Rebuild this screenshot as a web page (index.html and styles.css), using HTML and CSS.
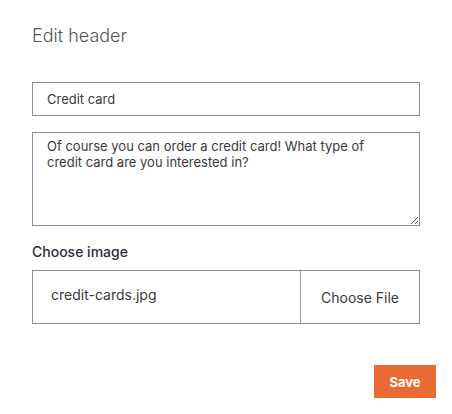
FILE: index.html
```html
<!DOCTYPE html>
<html lang="en">
<head>
    <meta charset="UTF-8">
    <meta name="viewport" content="width=device-width, initial-scale=1.0">
    <title>Edit header</title>
    <link rel="stylesheet" href="styles.css">
</head>
<body>
    <div class="panel">
        <h1 class="title">Edit header</h1>

        <form class="form">
            <input class="field" type="text" value="Credit card">

            <textarea class="field area">Of course you can order a credit card! What type of credit card are you interested in?</textarea>

            <label class="label">Choose image</label>
            <div class="file">
                <span class="file-name">credit-cards.jpg</span>
                <span class="file-btn">Choose File</span>
            </div>

            <div class="actions">
                <button type="button" class="save">Save</button>
            </div>
        </form>
    </div>
</body>
</html>
```

FILE: styles.css
```css
body {
    margin: 0;
    background: #fff;
    font-family: Inter, "Open Sans", sans-serif;
    color: #333;
}
.panel {
    padding: 24px 16px 16px 32px;
}
.title {
    margin: 0;
    font-size: 18px;
    line-height: 24px;
    font-weight: 300;
    color: #555;
}
.form {
    display: flex;
    flex-direction: column;
    margin-top: 34px;
    padding-right: 16px;
}
.field {
    box-sizing: border-box;
    height: 34px;
    margin: 0 0 16px;
    padding: 0 14px;
    border: 1px solid #8e8e92;
    border-radius: 0;
    font-family: inherit;
    font-size: 13px;
    color: #3a3a3a;
    outline: none;
}
.area {
    height: 94px;
    padding: 5px 50px 5px 14px;
    line-height: 16px;
    resize: vertical;
}
.label {
    font-size: 14px;
    line-height: 20px;
    font-weight: 500;
    color: #2a2c3c;
    margin-bottom: 8px;
}
.file {
    display: flex;
    height: 54px;
    box-sizing: border-box;
    border: 1px solid #8e8e92;
    font-size: 14px;
    color: #3a3a3a;
}
.file-name {
    flex: 1;
    padding-left: 18px;
    line-height: 48px;
}
.file-btn {
    width: 118px;
    border-left: 1px solid #9a9a9e;
    display: flex;
    align-items: center;
    justify-content: center;
}
.actions {
    display: flex;
    justify-content: flex-end;
    margin-top: 41px;
    margin-right: -16px;
}
.save {
    width: 62px;
    height: 33px;
    border: none;
    background: #e96a33;
    color: #fff;
    font-family: inherit;
    font-size: 13px;
    font-weight: 700;
    cursor: pointer;
}
```
